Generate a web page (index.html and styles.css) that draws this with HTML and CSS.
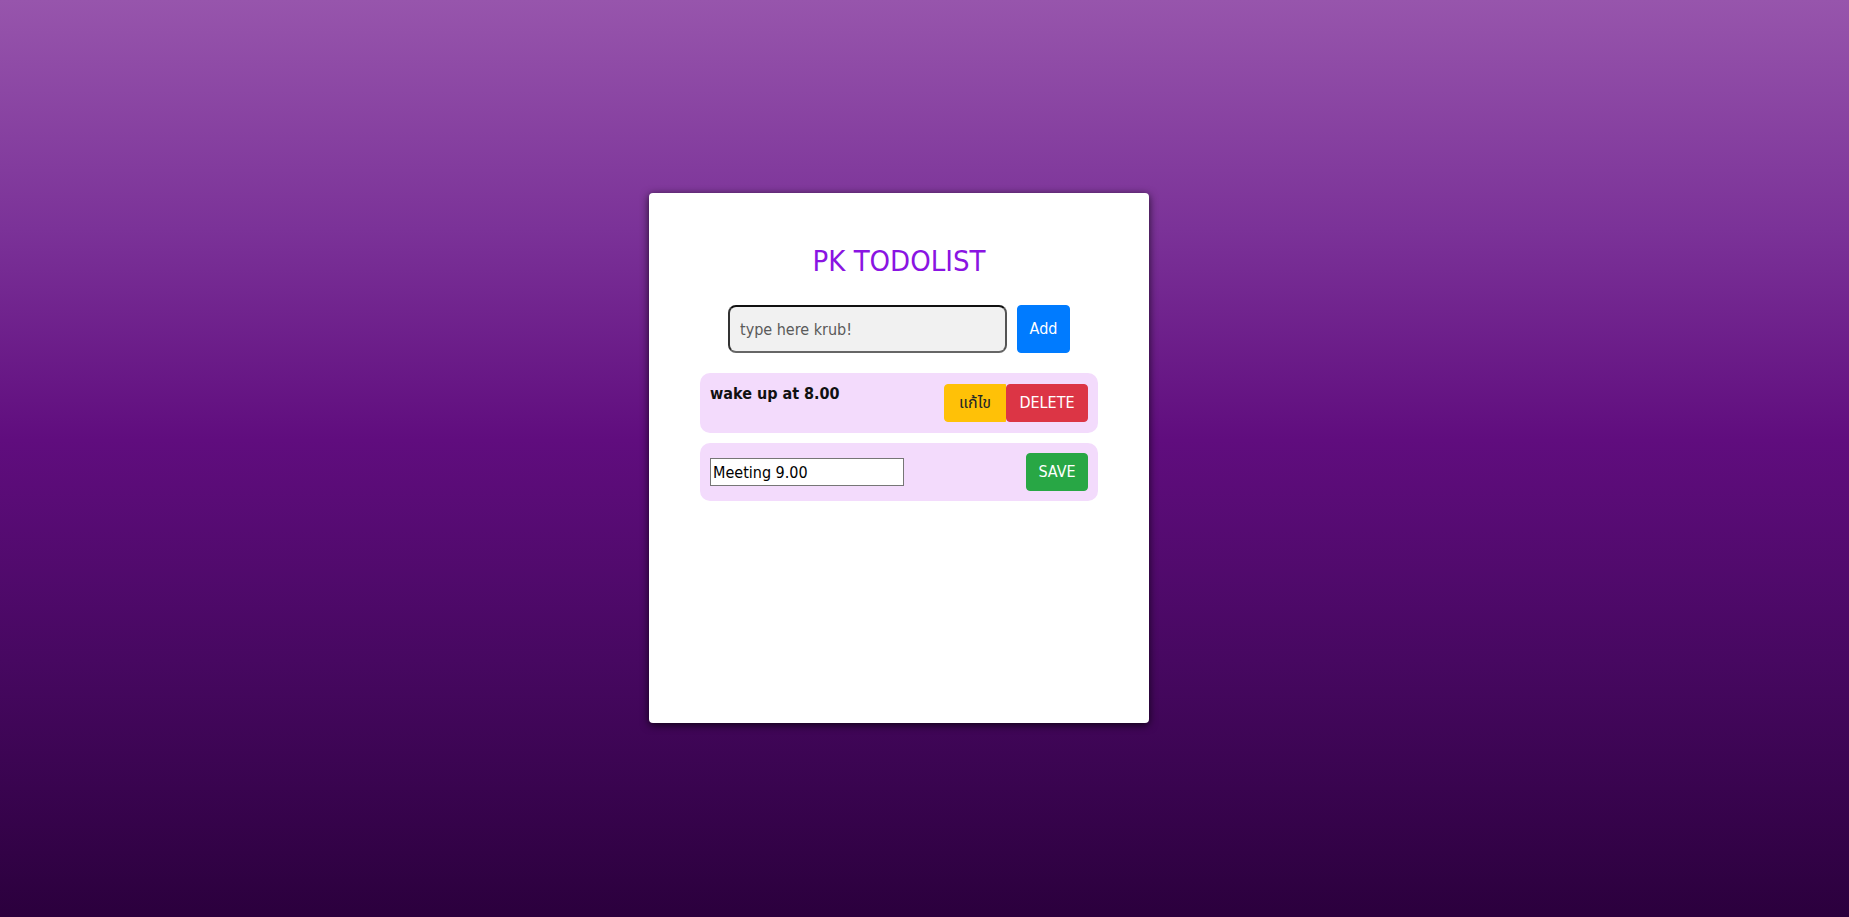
FILE: index.html
```html
<!DOCTYPE html>
<html lang="th">
<head>
<meta charset="utf-8">
<title>PK TODOLIST</title>
<link rel="stylesheet" href="styles.css">
</head>
<body>
<div class="page">
  <main class="card">
    <h1 class="title">PK TODOLIST</h1>
    <form class="add-form">
      <input class="add-input" type="text" placeholder="type here krub!">
      <button class="btn btn-add" type="button">Add</button>
    </form>
    <ul class="todo-list">
      <li class="todo-item">
        <span class="todo-text">wake up at 8.00</span>
        <div class="todo-actions">
          <button class="btn btn-edit" type="button">แก้ไข</button>
          <button class="btn btn-delete" type="button">DELETE</button>
        </div>
      </li>
      <li class="todo-item todo-item-editing">
        <input class="edit-input" type="text" value="Meeting 9.00">
        <button class="btn btn-save" type="button">SAVE</button>
      </li>
    </ul>
  </main>
</div>
</body>
</html>
```

FILE: styles.css
```css
html, body {
  margin: 0;
  padding: 0;
  height: 100%;
}

body {
  background: linear-gradient(to bottom, #9755ac 0%, #7b3298 25%, #600d7e 48%, #470861 72%, #2b003d 100%);
  font-family: "DejaVu Sans Condensed", "DejaVu Sans", "Noto Sans Thai", "Noto Sans", sans-serif;
  font-stretch: condensed;
  color: #212529;
  overflow: hidden;
}

.page {
  padding: 193px 0 0 649px;
}

.card {
  box-sizing: border-box;
  width: 500px;
  height: 530px;
  background: #fff;
  border-radius: 4px;
  box-shadow: 0 2px 8px rgba(0, 0, 0, 0.75);
  padding: 52px 51px 0;
}

.title {
  margin: 0;
  font-size: 29px;
  line-height: 33px;
  font-weight: normal;
  color: #8a14e2;
  text-align: center;
}

.add-form {
  margin: 27px 0 0;
  display: flex;
  justify-content: center;
  gap: 10px;
}

.add-input {
  box-sizing: border-box;
  width: 279px;
  height: 48px;
  border: 2px solid #333;
  border-color: #111 #555 #666 #333;
  border-radius: 8px;
  background: #f1f1f1;
  padding: 0 10px;
  font: inherit;
  font-size: 16px;
  color: #333;
  outline: none;
}

.add-input::placeholder {
  color: #5a5a5a;
}

.btn {
  box-sizing: border-box;
  font-family: inherit;
  font-stretch: condensed;
  font-size: 16px;
  line-height: 24px;
  padding: 6px 12px;
  border: 1px solid transparent;
  border-radius: 4px;
  cursor: pointer;
}

.btn-add {
  width: 53px;
  height: 48px;
  padding: 0;
  background: #007bff;
  border-color: #007bff;
  color: #fff;
}

.todo-list {
  list-style: none;
  margin: 20px 0 0;
  padding: 0;
  display: flex;
  flex-direction: column;
  gap: 10px;
}

.todo-item {
  box-sizing: border-box;
  display: flex;
  justify-content: space-between;
  align-items: flex-start;
  height: 60px;
  padding: 11px 10px;
  background: #f3dbfc;
  border-radius: 10px;
}

.todo-item-editing {
  height: 58px;
  padding: 10px;
  align-items: center;
}

.todo-text {
  font-weight: bold;
  font-size: 16px;
  line-height: 18px;
  color: #111;
  padding-top: 1px;
}

.todo-actions {
  display: flex;
  height: 38px;
}

.btn-edit {
  width: 62px;
  height: 38px;
  padding: 0;
  background: #ffc107;
  border-color: #ffc107;
  color: #212529;
  border-radius: 4px 0 0 4px;
}

.btn-delete {
  width: 82px;
  height: 38px;
  padding: 0;
  background: #dc3545;
  border-color: #dc3545;
  color: #fff;
}

.btn-save {
  width: 62px;
  height: 38px;
  padding: 0;
  background: #28a745;
  border-color: #28a745;
  color: #fff;
}

.edit-input {
  box-sizing: border-box;
  width: 194px;
  height: 28px;
  border: 1px solid #767676;
  background: #fff;
  padding: 1px 2px;
  font: inherit;
  font-size: 16px;
  color: #000;
  outline: none;
}
```
